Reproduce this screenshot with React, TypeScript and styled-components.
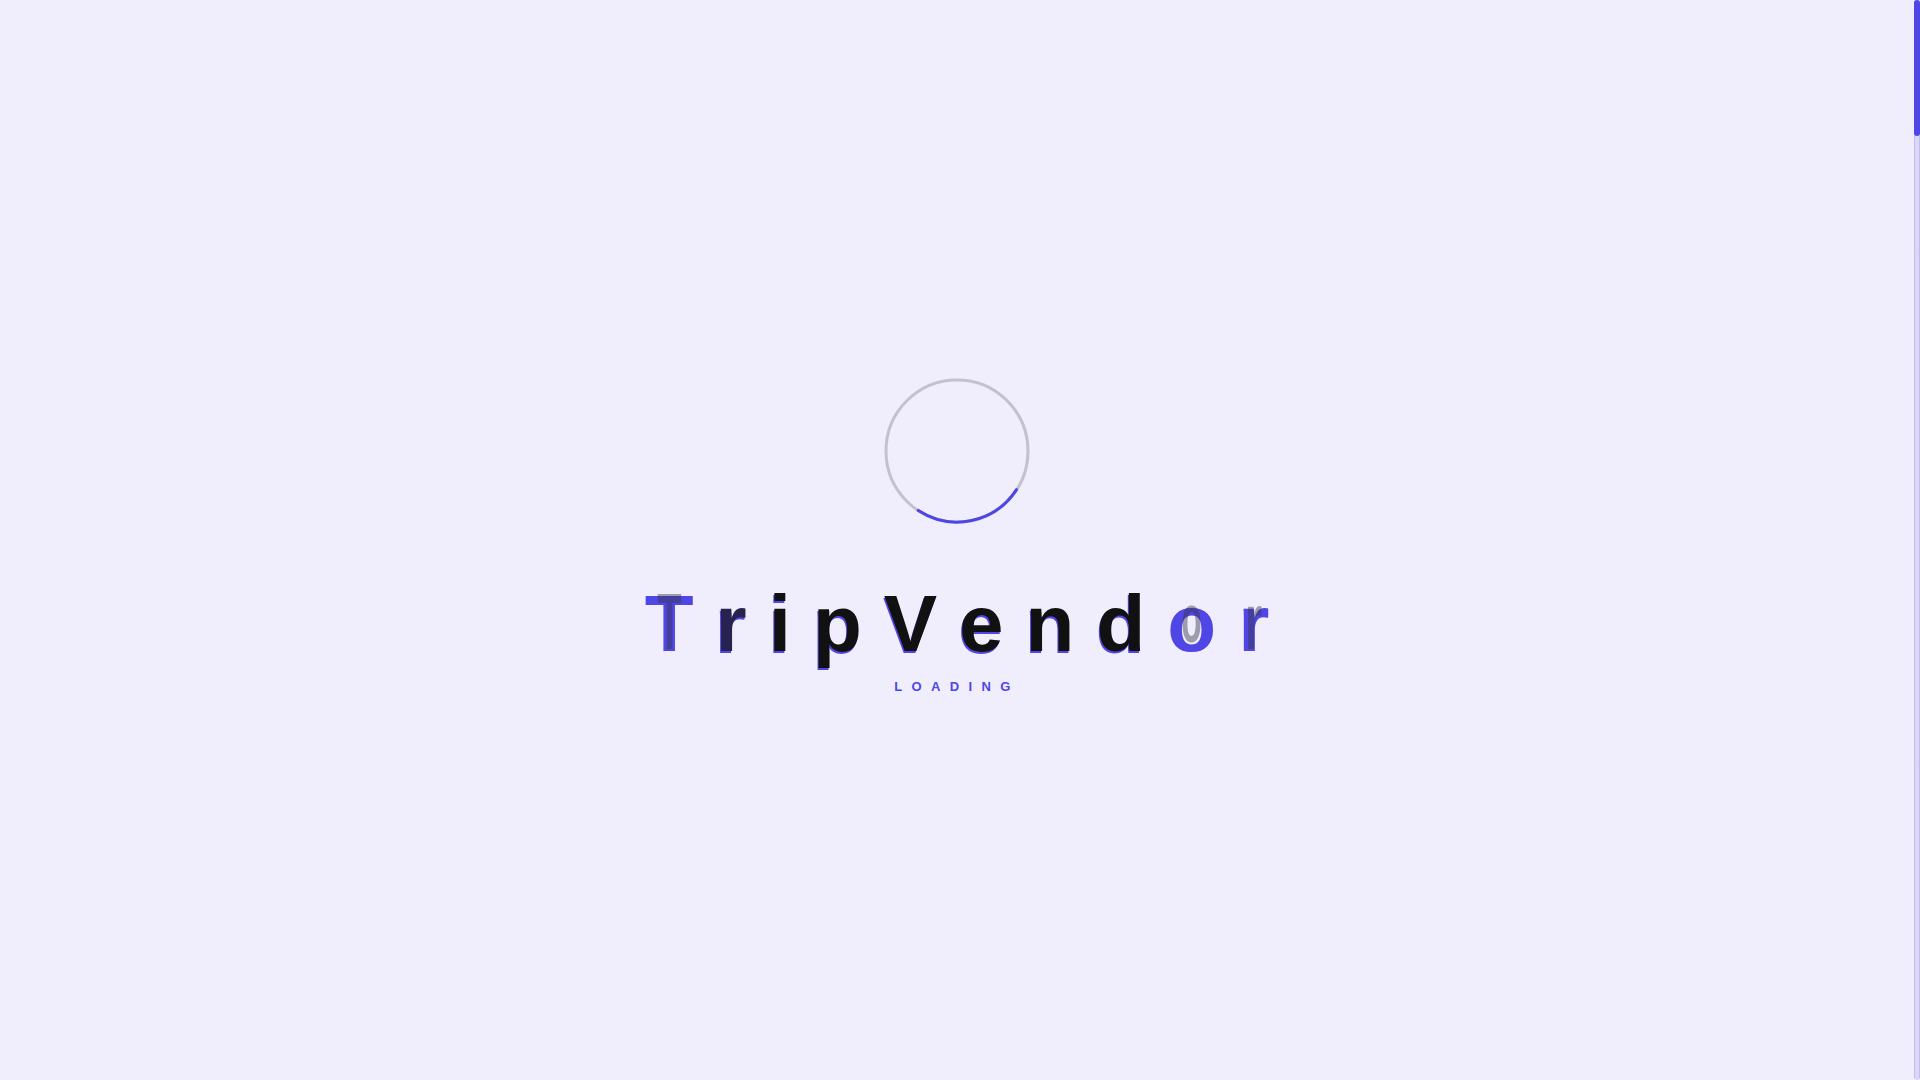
import styled, { createGlobalStyle } from "styled-components";

// 색상
const ACCENT = "#4f46e5";
const PAGE_BG = "#f0eefc";

const GlobalStyle = createGlobalStyle`
  html, body {
    margin: 0;
    padding: 0;
    height: 100%;
    overflow: hidden;
    background: ${PAGE_BG};
    font-family: "Liberation Sans", Arial, sans-serif;
  }
`;

type Tone = "ink" | "night" | "accent";

interface LetterItem {
  char: string;
  tone: Tone;
  ghost?: string;
}

// 글자마다 애니메이션 중간 상태를 고정한 값입니다.
const LETTERS: LetterItem[] = [
  { char: "T", tone: "accent", ghost: "translateY(-2px) scaleX(0.5)" },
  { char: "r", tone: "night" },
  { char: "i", tone: "ink" },
  { char: "p", tone: "ink" },
  { char: "V", tone: "ink" },
  { char: "e", tone: "ink" },
  { char: "n", tone: "ink" },
  { char: "d", tone: "ink" },
  { char: "o", tone: "accent", ghost: "translateY(-5px) scale(0.42, 0.86)" },
  { char: "r", tone: "accent", ghost: "translateY(-2px) scaleX(0.55)" },
];

const TONE_COLOR: Record<Tone, string> = {
  ink: "#111111",
  night: "#27224f",
  accent: ACCENT,
};

function Spinner(): JSX.Element {
  const r = 71;
  const circumference = 2 * Math.PI * r;
  return (
    <SpinnerSvg width="148" height="148" viewBox="0 0 148 148">
      <circle cx="74" cy="74" r={r} fill="none" stroke="#c3c1cc" strokeWidth="3" />
      <circle
        cx="74"
        cy="74"
        r={r}
        fill="none"
        stroke={ACCENT}
        strokeWidth="3"
        strokeLinecap="round"
        strokeDasharray={`${circumference / 4} ${circumference}`}
        transform="rotate(33 74 74)"
      />
    </SpinnerSvg>
  );
}

function App(): JSX.Element {
  return (
    <>
      <GlobalStyle />

      {/** 로딩 화면 영역입니다. */}
      <LoaderDiv className="loader">
        <Spinner />

        <BrandDiv className="loader__brand">
          {LETTERS.map((item, i) => (
            <Letter
              key={i}
              data-char={item.char}
              $tone={item.tone}
              $ghost={item.ghost}
            >
              {item.char}
            </Letter>
          ))}
        </BrandDiv>

        <LoadingText className="loader__text">{"LOADING"}</LoadingText>
      </LoaderDiv>

      {/** 오른쪽 스크롤바 영역입니다. */}
      <ScrollRail className="scroll__rail">
        <ScrollThumb className="scroll__thumb" />
      </ScrollRail>
    </>
  );
}

export default App;

const LoaderDiv = styled.div`
  position: fixed;
  inset: 0;
  right: 6px;
  display: flex;
  flex-direction: column;
  align-items: center;
  justify-content: center;
  padding-bottom: 11px;
  box-sizing: border-box;
  background: ${PAGE_BG};
`;

const SpinnerSvg = styled.svg`
  display: block;
  flex-shrink: 0;
`;

const BrandDiv = styled.div`
  display: flex;
  gap: 22px;
  margin-top: 59px;
  font-size: 80px;
  font-weight: 700;
  line-height: 1;
`;

const Letter = styled.span<{ $tone: Tone; $ghost?: string }>`
  position: relative;
  display: inline-block;
  color: ${({ $tone }) => TONE_COLOR[$tone]};
  text-shadow: ${({ $tone }) =>
    $tone === "accent" ? "none" : `-1px 2px 0 ${ACCENT}`};

  &::after {
    content: ${({ $ghost }) => ($ghost ? "attr(data-char)" : "none")};
    position: absolute;
    inset: 0;
    color: rgba(55, 55, 70, 0.45);
    text-shadow: none;
    transform: ${({ $ghost }) => $ghost ?? "none"};
  }
`;

const LoadingText = styled.div`
  margin-top: 16px;
  font-size: 13px;
  font-weight: 700;
  line-height: 1;
  letter-spacing: 9.4px;
  color: ${ACCENT};
`;

const ScrollRail = styled.div`
  position: fixed;
  top: 0;
  right: 0;
  bottom: 0;
  width: 6px;
  border-radius: 3px;
  background: linear-gradient(
    90deg,
    #b8b3ee 0%,
    #e4e2fa 35%,
    #cdc9f3 50%,
    #e4e2fa 65%,
    #b8b3ee 100%
  );
`;

const ScrollThumb = styled.div`
  height: 136px;
  border-radius: 3px;
  background: ${ACCENT};
`;
